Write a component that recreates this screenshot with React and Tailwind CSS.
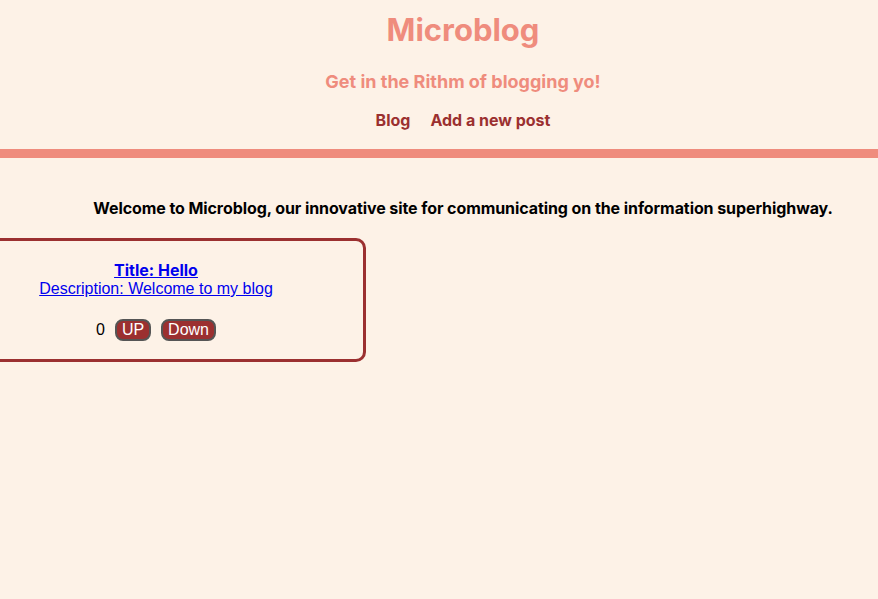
export default function App() {
  return (
    <div className="min-h-[599px] w-full overflow-hidden bg-[#fdf2e7] font-['Inter',sans-serif]">
      <header className="flex flex-col items-center pl-12 pt-[11px]">
        <h1 className="text-[31px] font-bold leading-[38px] text-[#ef8c7d]">Microblog</h1>
        <p className="mt-[22px] text-[18px] font-bold leading-[22px] text-[#ef8c7d]">
          Get in the Rithm of blogging yo!
        </p>
        <nav className="mt-[17px] flex gap-5 text-[16px] font-bold leading-5 text-[#9b3030]">
          <a href="#">Blog</a>
          <a href="#">Add a new post</a>
        </nav>
      </header>
      <div className="mt-[19px] h-[9px] w-full bg-[#ef8c7d]" />
      <main>
        <p className="mt-[40px] pl-12 text-center text-[16px] font-bold leading-5 tracking-[-0.005em] text-black">
          Welcome to Microblog, our innovative site for communicating on the information superhighway.
        </p>
        <div className="ml-[-54px] mt-[20px] flex h-[124px] w-[420px] flex-col items-center rounded-[10px] border-[3px] border-[#9b3030] pt-[20px]">
          <a href="#" className="text-[16px] font-bold leading-[19px] text-[#0000ee] underline">
            Title: Hello
          </a>
          <a href="#" className="font-['Liberation_Sans',Arial,sans-serif] text-[16px] leading-[18px] text-[#0000ee] underline">
            Description: Welcome to my blog
          </a>
          <div className="mt-[20px] flex items-center gap-[10px] font-['Liberation_Sans',Arial,sans-serif] text-[16px] text-black">
            <span>0</span>
            <button className="h-[22px] rounded-[8px] border-2 border-[#555] bg-[#9b3030] px-[5px] text-[16px] leading-none text-white">
              UP
            </button>
            <button className="h-[22px] rounded-[8px] border-2 border-[#555] bg-[#9b3030] px-[5px] text-[16px] leading-none text-white">
              Down
            </button>
          </div>
        </div>
      </main>
    </div>
  );
}
